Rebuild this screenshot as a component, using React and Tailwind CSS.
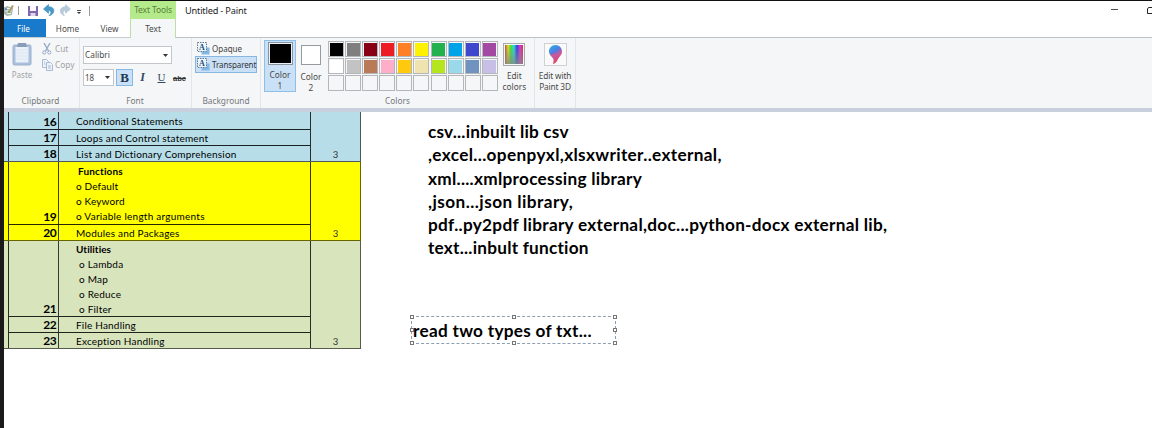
import React from "react";

const palette = [
  ["#000000", "#7f7f7f", "#880015", "#ed1c24", "#ff7f27", "#fff200", "#22b14c", "#00a2e8", "#3f48cc", "#a349a4"],
  ["#ffffff", "#c3c3c3", "#b97a57", "#ffaec9", "#ffc90e", "#efe4b0", "#b5e61d", "#99d9ea", "#7092be", "#c8bfe7"],
  ["#f5f6f7", "#f5f6f7", "#f5f6f7", "#f5f6f7", "#f5f6f7", "#f5f6f7", "#f5f6f7", "#f5f6f7", "#f5f6f7", "#f5f6f7"],
];

function Line({ className = "", children }) {
  return <div className={"whitespace-pre " + className}>{children}</div>;
}

function QuickAccess() {
  return (
    <svg width="92" height="18" viewBox="4 1 92 18" className="shrink-0">
      <path d="M4 7.500l3-1.500 6 2-1 7-5 1-3-2z" fill="#a9b9b4" />
      <path d="M6 8.500h5M5.500 11h6M7 13.500h4" stroke="#f4f6f4" strokeWidth="1" />
      <path d="M8.500 12.500l4.500-7" stroke="#b89a65" strokeWidth="2" />
      <circle cx="6" cy="9" r="1" fill="#4b8dbd" />
      <circle cx="9" cy="12" r="1" fill="#779d5d" />
      <path d="M18.500 6v9M89.500 6v10" stroke="#9a9a9a" strokeWidth="1" />
      <path d="M28 6h10v10H28z" fill="#8067a9" />
      <path d="M30 6h6v5h-6z" fill="#faf8fc" />
      <path d="M30.500 13h5v3h-5z" fill="#ddd5ea" />
      <path d="M48.500 4.500L43.500 9l5 4.300V10.800c3 0 3.300 2 .5 5 6.200-1.600 7-9-.5-9z" fill="#4897c8" stroke="#4897c8" strokeWidth=".8" />
      <path d="M66 4.500L61 9l5 4.300V10.800c3-.5 4-1.500 4.500-3.500-1.500-.8-3-.8-4.500-.5z" fill="none" />
      <path d="M65.500 4.500L70.500 9l-5 4.300V10.800c-3 0-3 2.500-1 5-6-2-5.500-9 1-9z" fill="#b8cad9" stroke="#b8cad9" strokeWidth=".8" />
      <path d="M77 10.500h4" stroke="#555" />
      <path d="M77 12h4l-2 2z" fill="#333" />
    </svg>
  );
}

function PasteIcon() {
  return (
    <svg width="20" height="24" viewBox="0 0 20 24">
      <rect x="1" y="3" width="18" height="20" rx="1.500" fill="#a9bfdc" stroke="#9cb2d0" />
      <rect x="3.500" y="5" width="13" height="15.500" fill="#e9f0f8" />
      <path d="M4 8h12M4 11h12M4 14h12M4 17h12" stroke="#dce6f3" />
      <path d="M6 1h8l1 4H5z" fill="#8a9db8" />
    </svg>
  );
}

function CutIcon() {
  return (
    <svg width="10" height="12" viewBox="0 0 10 12" fill="none" stroke="#98abc2">
      <path d="M2 0l4.500 8M8 0L3.500 8" strokeWidth="1.400" />
      <circle cx="2.200" cy="9.500" r="1.600" />
      <circle cx="7.300" cy="9.500" r="1.600" />
    </svg>
  );
}

function CopyIcon() {
  return (
    <svg width="11" height="12" viewBox="0 0 11 12" stroke="#a9bbd2" fill="#eef3fa">
      <path d="M.5.500h4l2 2v6h-6z" />
      <path d="M4.500 3.500h4l2 2v6h-6z" />
      <path d="M6 7h3M6 9h3M2 3h1M2 5h1.500" />
    </svg>
  );
}

function BackgroundIcon() {
  return (
    <svg width="13" height="13" viewBox="0 0 13 13" className="shrink-0">
      <path d="M8 5.500h4.500V12.500H4.500V9H8z" fill="#81b8e8" />
      <rect x=".5" y=".5" width="9" height="9" fill="#edf6fd" stroke="#61798f" strokeDasharray="1.500 1" />
      <text x="2" y="8" fontSize="8" fontWeight="700" fontFamily="Liberation Serif, serif" fill="#234d77">A</text>
    </svg>
  );
}

function Caret() {
  return (
    <svg width="5" height="3" viewBox="0 0 5 3" className="shrink-0">
      <path d="M0 0h5L2.500 3z" fill="#333" />
    </svg>
  );
}

function GroupLabel({ children }) {
  return <div className="mt-auto h-[13px] text-center text-[8.300px] leading-[12px] whitespace-nowrap text-[#74777a]">{children}</div>;
}

function Header() {
  return (
    <div className="flex h-[37px] shrink-0 bg-white">
      <div className="flex w-[126px] flex-col">
        <div className="flex h-[18px] items-center"><QuickAccess /></div>
        <div className="flex h-[18px] text-[8.500px] leading-[19px] text-[#4a4a4a]">
          <div className="w-[42px] bg-[#1979ca] pr-[3px] text-center text-[8px] text-white">File</div>
          <div className="w-[43px] text-center text-[8.200px]">Home</div>
          <div className="w-[41px] text-center text-[8.200px]">View</div>
        </div>
        <div className="h-px bg-[#c9ccd0]" />
      </div>
      <div className="flex w-[46px] flex-col text-center text-[8.500px]">
        <div className="h-[18px] bg-[#b5ea8c] leading-[18px] tracking-[-0.15px] whitespace-nowrap text-[#568139]">Text Tools</div>
        <div className="h-[19px] border-x border-[#bddda8] bg-[#f5f6f7] text-[8.200px] leading-[19px] text-[#4a4a4a]">Text</div>
      </div>
      <div className="flex flex-1 flex-col">
        <div className="flex h-9 items-start justify-between">
          <Line className="pt-[3px] pl-[9px] text-[9.200px] leading-[14px] tracking-[-0.180px] text-[#222]">Untitled - Paint</Line>
          <svg width="46" height="18" viewBox="0 0 46 18" fill="none" stroke="#222">
            <path d="M5 8.500h7" strokeWidth=".8" />
            <path d="M46 6.500h-3.500l-1 1.500v4.500H46" />
          </svg>
        </div>
        <div className="h-px bg-[#bfc1c4]" />
      </div>
    </div>
  );
}

function Clipboard() {
  return (
    <div className="flex w-[76px] flex-col border-r border-[#e3e5e8]">
      <div className="flex pt-[4px] text-[8.300px] text-[#a0a3a6]">
        <div className="flex w-[36px] flex-col items-center">
          <PasteIcon />
          <div className="mt-[3px] text-[8px] leading-[12px]">Paste</div>
        </div>
        <div className="flex flex-col gap-[4px] pt-px pl-[2px]">
          <div className="flex h-[12px] items-center gap-[3px]"><CutIcon />Cut</div>
          <div className="flex h-[12px] items-center gap-[2px]"><CopyIcon />Copy</div>
        </div>
      </div>
      <GroupLabel><span className="pr-[2px]">Clipboard</span></GroupLabel>
    </div>
  );
}

function FontGroup() {
  return (
    <div className="flex w-[112px] flex-col border-r border-[#e3e5e8] pl-[3px]">
      <div className="mt-[8px] flex h-[18px] w-[89px] items-center justify-between border border-[#c3c7cb] bg-white px-px pr-[3px] text-[8.300px] text-[#4a4a4a]">
        Calibri<Caret />
      </div>
      <div className="mt-[5px] flex h-[17px]">
        <div className="flex w-[31px] items-center justify-between border border-[#c3c7cb] bg-white pr-[3px] pl-px text-[8px] text-[#4a4a4a]">
          18<Caret />
        </div>
        <div className="ml-[2px] w-[17px] border border-[#83b9e7] bg-[#c9e0f7] text-center font-['Liberation_Serif',serif] text-[13px] leading-[15px] font-bold text-[#20374e]">B</div>
        <div className="w-[19px] text-center font-['Liberation_Serif',serif] text-[12px] leading-[17px] font-bold text-[#34495e] italic">I</div>
        <div className="w-[19px] text-center font-['Liberation_Serif',serif] text-[11px] leading-[17px] text-[#34495e] underline">U</div>
        <div className="w-[17px] text-center font-['Liberation_Sans',sans-serif] text-[7.500px] leading-[19px] font-bold text-[#333] line-through">abc</div>
      </div>
      <GroupLabel><span className="pr-[4px]">Font</span></GroupLabel>
    </div>
  );
}

function BackgroundGroup() {
  return (
    <div className="flex w-[69px] flex-col border-r border-[#e3e5e8] px-[3px]">
      <div className="mt-[3px] flex h-[15px] items-center gap-[2px] pl-[2px] text-[8px] text-[#444]"><BackgroundIcon /><span className="pt-px">Opaque</span></div>
      <div className="flex h-[17px] w-[62px] items-center gap-[2px] border border-[#89b7e2] bg-[#c9e0f7] pl-px text-[8px] tracking-[-0.100px] text-[#333]"><BackgroundIcon /><span className="pt-px">Transparent</span></div>
      <GroupLabel>Background</GroupLabel>
    </div>
  );
}

function Colors() {
  return (
    <div className="flex w-[274px] flex-col border-r border-[#e3e5e8]">
      <div className="flex pl-[3px] text-center text-[8.300px] leading-[11px] text-[#4a4a4a]">
        <div className="mt-[2px] flex h-[52px] w-[32px] flex-col items-center border border-[#8dbfe9] bg-[#c9e0f7] pt-px">
          <div className="mb-[4px] size-[25px] border border-[#8c959d] bg-[#e5f1fb] p-px"><div className="size-full bg-black" /></div>
          Color<br />1
        </div>
        <div className="flex w-[29px] flex-col items-center pt-[7px] pl-px">
          <div className="mb-[6px] size-[20px] border border-[#969a9e] bg-white" />
          Color<br />2
        </div>
        <div className="mt-[3px] ml-[3px] flex flex-col gap-px">
          {palette.map((row, r) => (
            <div key={r} className="flex gap-[1.100px]">
              {row.map((c, i) => (
                <div key={i} className="size-[16px] border border-[#b4b7ba] p-[0.500px]">
                  <div className="size-full" style={{ backgroundColor: c }} />
                </div>
              ))}
            </div>
          ))}
        </div>
        <div className="mt-[5px] flex w-[33px] flex-col items-center">
          <div className="mb-[4px] h-[23px] w-[22px] border border-[#a8abae] p-px">
            <div className="size-full bg-[linear-gradient(to_bottom,transparent,#888c),linear-gradient(to_right,#b05040,#eadd20,#35e634,#27dfe0,#3138dd,#d938d8,#df2746)]" />
          </div>
          Edit<br />colors
        </div>
      </div>
      <GroupLabel>Colors</GroupLabel>
    </div>
  );
}

function PaintThreeD() {
  return (
    <div className="flex w-[41px] flex-col items-center border-r border-[#e3e5e8] pt-[5px] text-center text-[8.300px] leading-[11px] tracking-[-0.150px] whitespace-nowrap text-[#4a4a4a]">
      <svg width="23" height="23" viewBox="0 0 23 23" className="mb-[4px] shrink-0">
        <defs>
          <linearGradient id="drop" x1="0" y1="0" x2=".5" y2="1">
            <stop offset="0" stopColor="#20bce8" />
            <stop offset=".45" stopColor="#527ae0" />
            <stop offset=".68" stopColor="#cb579f" />
            <stop offset="1" stopColor="#e93f50" />
          </linearGradient>
        </defs>
        <rect x=".5" y=".5" width="22" height="22" fill="#fafafa" stroke="#cfd1d3" />
        <path d="M11.500 2C7.500 2 5 5 5 8.500c0 3.500 3.500 5 4.500 8 .3 2-.5 3.500-.5 4.500 4-1 4-4 6-6.500s3-3.500 3-6C18 5 15.500 2 11.500 2z" fill="url(#drop)" />
        <path d="M5.500 11c2.500 1 5 .5 7-1.500-.5 3-3 4-4.500 4.500z" fill="#ee507a" opacity=".7" />
      </svg>
      Edit with<br />Paint 3D
    </div>
  );
}

function Num({ children, className = "" }) {
  return (
    <div className={"flex w-[50px] shrink-0 items-end justify-end border-r border-black/75 pr-[2px] text-[12px] leading-[14px] font-bold tracking-[-0.600px] " + className}>
      {children}
    </div>
  );
}

function Row({ n, last, children, className = "" }) {
  return (
    <div className={"flex items-stretch " + (last ? "" : "border-b border-black/85 ") + className}>
      <Num>{n}</Num>
      <Line className="pl-[17px] text-[10px] leading-[16px] tracking-[0.200px]">{children}</Line>
    </div>
  );
}

function Section({ className, children }) {
  return (
    <div className={"flex w-[357px] border-r border-b border-black/60 pl-[4px] " + className}>
      <div className="w-[303px] border-x border-black/80">{children}</div>
      <div className="flex flex-1 items-end justify-center text-[9.500px] leading-[13px] text-[#333]">3</div>
    </div>
  );
}

function Schedule() {
  return (
    <div className="w-[358px] shrink-0 font-[Lato,sans-serif] text-black">
      <Section className="h-[50px] bg-[#b7dee8]">
        <div className="flex h-[18px] border-b border-black/85">
          <Num>16</Num>
          <Line className="pl-[17px] text-[10px] leading-[18px] tracking-[0.200px]">Conditional Statements</Line>
        </div>
        <Row n="17" className="h-[16px]">Loops and Control statement</Row>
        <Row n="18" last className="h-[15px]">List and Dictionary Comprehension</Row>
      </Section>
      <Section className="h-[79px] bg-[#ffff00]">
        <div className="flex h-[63px] border-b border-black/85">
          <Num>19</Num>
          <div className="pt-[2px] pl-[17px] text-[10px] leading-[15.100px] tracking-[0.150px]">
            <Line className="pl-[2px] font-bold">Functions</Line>
            <Line>o Default</Line>
            <Line>o Keyword</Line>
            <Line className="tracking-[0.250px]">o Variable length arguments</Line>
          </div>
        </div>
        <Row n="20" last className="h-[15px]">Modules and Packages</Row>
      </Section>
      <Section className="h-[108px] bg-[#d8e4bc]">
        <div className="flex h-[76px] border-b border-black/85">
          <Num>21</Num>
          <div className="pt-px pl-[17px] text-[10px] leading-[15.100px] tracking-[0.200px]">
            <Line className="font-bold tracking-[0.050px]">Utilities</Line>
            <div className="pl-[3px]">
              <Line>o Lambda</Line>
              <Line>o Map</Line>
              <Line>o Reduce</Line>
              <Line>o Filter</Line>
            </div>
          </div>
        </div>
        <Row n="22" className="h-[16px]">File Handling</Row>
        <Row n="23" last className="h-[15px]">Exception Handling</Row>
      </Section>
    </div>
  );
}

function Handle({ className }) {
  return <div className={"absolute size-[4px] border border-[#777] bg-white " + className} />;
}

function Notes() {
  return (
    <div className="pt-[8px] pl-[45px] font-[Lato,sans-serif] text-[17.200px] font-bold tracking-[0.290px] text-black">
      <div className="pl-[21px] leading-[23.300px]">
        <Line className="tracking-[0.200px]">csv...inbuilt lib csv</Line>
        <Line className="tracking-[0.350px]">,excel...openpyxl,xlsxwriter..external,</Line>
        <Line>xml....xmlprocessing library</Line>
        <Line className="tracking-[0.450px]">,json...json library,</Line>
        <Line>pdf..py2pdf library external,doc...python-docx external lib,</Line>
        <Line className="tracking-[0.240px]">text...inbult function</Line>
      </div>
      <div className="relative mt-[56px] ml-[4px] h-[28px] w-[205px] border border-dashed border-[#8c9eb0] pl-px leading-[28px]">
        <Line>read two types of txt...</Line>
        <Handle className="-top-[2px] -left-[2px]" />
        <Handle className="-top-[2px] left-[100px]" />
        <Handle className="-top-[2px] -right-[2px]" />
        <Handle className="top-[11px] -left-[2px]" />
        <Handle className="top-[11px] -right-[2px]" />
        <Handle className="-bottom-[2px] -left-[2px]" />
        <Handle className="-bottom-[2px] left-[100px]" />
        <Handle className="-right-[2px] -bottom-[2px]" />
      </div>
    </div>
  );
}

export default function App() {
  return (
    <div className="flex h-[428px] w-[1152px] flex-col overflow-hidden border-t border-l-4 border-t-[#111] border-l-[#1b1919] bg-white font-['Noto_Sans',sans-serif]">
      <Header />
      <div className="flex h-[70px] shrink-0 bg-[#f5f6f7]">
        <Clipboard />
        <FontGroup />
        <BackgroundGroup />
        <Colors />
        <PaintThreeD />
      </div>
      <div className="h-[4px] shrink-0 bg-[#c9d0dd]" />
      <div className="flex flex-1 bg-white">
        <Schedule />
        <Notes />
      </div>
    </div>
  );
}
